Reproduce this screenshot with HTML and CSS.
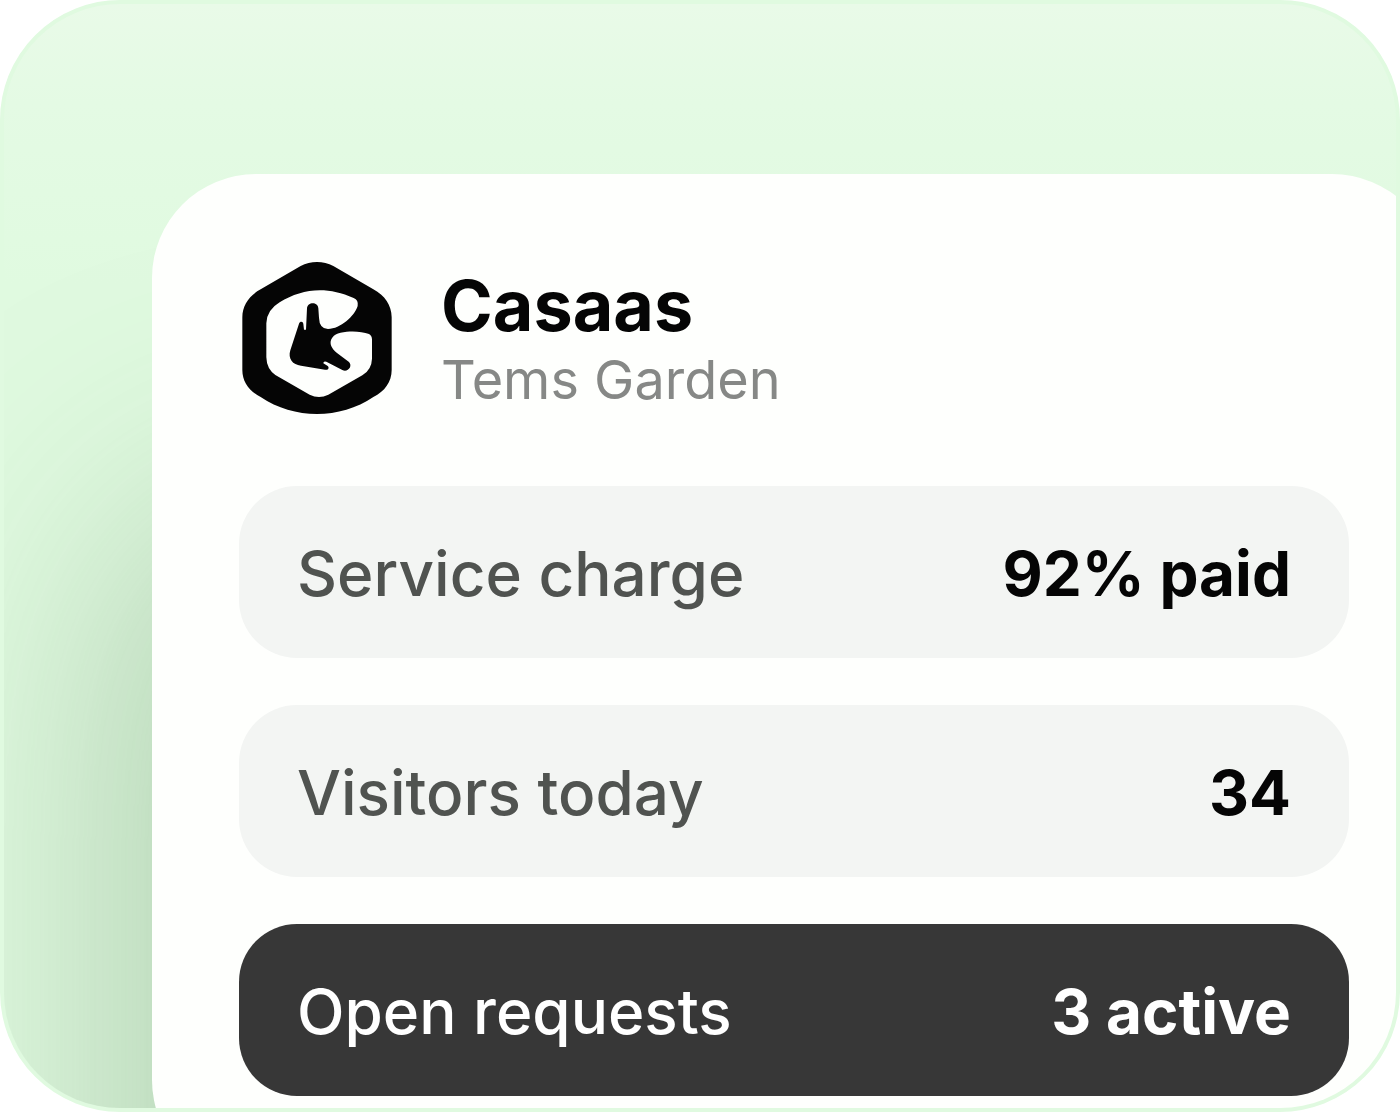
FILE: index.html
```
<!DOCTYPE html>
<html lang="en">
<head>
    <meta charset="UTF-8">
    <meta name="viewport" content="width=device-width, initial-scale=1.0">
    <title>Casaas</title>
    <link rel="stylesheet" href="styles.css">
</head>
<body>
<main class="panel">
    <section class="card">
        <header class="card-header">
            <svg class="logo" viewBox="27 36 468 456" aria-hidden="true">
                <path fill="#050505" d="M212 48 C242 32 280 32 310 48 L430 118 C464 136 485 166 485 202 V360 C485 396 464 424 430 441 C330 509 192 509 92 441 C58 424 37 396 37 360 V202 C37 166 58 136 92 118 Z"/>
                <path fill="#fefffd" d="M149 157 C215 116 289 107 371 144 Q386 150 383 168 C373 199 332 236 294 237 Q268 236 267 203 L265 175 C264 154 232 155 231 175 L228 239 H222 L220 222 C219 213 210 213 207 221 L181 301 C173 326 188 345 213 347 L285 359 C296 361 299 352 292 347 L280 340 Q280 332 289 335 L337 360 C353 368 369 349 357 336 L325 312 C309 300 300 288 302 274 C306 255 323 248 350 245 C375 243 399 245 417 252 Q426 257 426 269 V326 Q425 359 397 376 L295 434 Q267 448 239 434 L136 375 Q110 357 109 322 V220 Q110 180 149 157 Z"/>
            </svg>
            <div class="card-title">
                <h1>Casaas</h1>
                <p>Tems Garden</p>
            </div>
        </header>
        <dl class="stats">
            <div class="stat">
                <dt>Service charge</dt>
                <dd>92% paid</dd>
            </div>
            <div class="stat">
                <dt>Visitors today</dt>
                <dd>34</dd>
            </div>
            <div class="stat stat-dark">
                <dt>Open requests</dt>
                <dd>3 active</dd>
            </div>
        </dl>
    </section>
</main>
</body>
</html>
```
FILE: styles.css
```
* {
    box-sizing: border-box;
}

body {
    margin: 0;
    background-color: white;
    font-family: Inter, "Liberation Sans", Arial, sans-serif;
}

.panel {
    height: 100vh;
    padding: 170px 0 0 148px;
    border: 4px solid #e0fae0;
    border-radius: 120px;
    background: linear-gradient(#e9fae8, #e4fae4 100px, #e0fae0 280px);
    overflow: hidden;
}

.card {
    margin-right: -40px;
    padding: 88px 87px;
    border-radius: 104px;
    background-color: #fefffd;
    box-shadow: 0 370px 320px 40px rgba(90, 130, 90, 0.34);
}

.card-header {
    display: flex;
    align-items: center;
    gap: 46px;
    margin-bottom: 72px;
}

.logo {
    width: 156px;
    height: 152px;
}

.card-title {
    padding-top: 4px;
}

.card-title h1 {
    margin: 0;
    font-size: 70px;
    line-height: 80px;
    font-weight: 700;
    color: #050505;
}

.card-title p {
    margin: 0;
    font-size: 54px;
    line-height: 68px;
    color: #868886;
}

.stats {
    display: flex;
    flex-direction: column;
    gap: 47px;
    margin: 0;
}

.stat {
    display: flex;
    justify-content: space-between;
    padding: 50px 58px 46px;
    border-radius: 58px;
    background-color: #f3f5f3;
    font-size: 62px;
    line-height: 76px;
    color: #505350;
}

.stat dt {
    font-weight: 500;
}

.stat dd {
    margin: 0;
    font-weight: 700;
    color: #050505;
}

.stat-dark,
.stat-dark dd {
    background-color: #373737;
    color: white;
}
```
